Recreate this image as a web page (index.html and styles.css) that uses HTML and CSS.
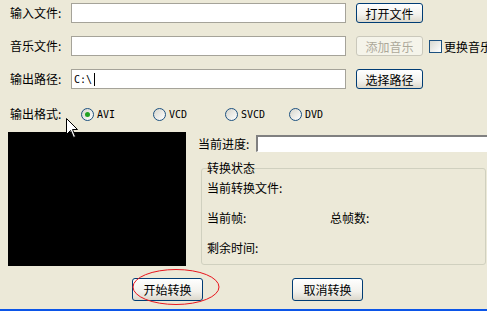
FILE: index.html
```html
<!DOCTYPE html>
<html lang="zh-CN">
<head>
    <meta charset="UTF-8">
    <title>视频转换</title>
    <link rel="stylesheet" href="styles.css">
</head>
<body>
    <div class="dialog">
        <div class="row">
            <label class="caption">输入文件:</label>
            <input type="text" class="field">
            <button class="btn">打开文件</button>
        </div>
        <div class="row">
            <label class="caption">音乐文件:</label>
            <input type="text" class="field">
            <button class="btn" disabled>添加音乐</button>
            <span class="check"></span>
            <span class="check-text">更换音乐</span>
        </div>
        <div class="row">
            <label class="caption">输出路径:</label>
            <div class="field path"><span class="mono">C:\</span><span class="caret"></span></div>
            <button class="btn">选择路径</button>
        </div>
        <div class="row radios">
            <label class="caption wide">输出格式:</label>
            <span class="opt"><span class="radio checked"></span><span class="mono">AVI</span></span>
            <span class="opt"><span class="radio"></span><span class="mono">VCD</span></span>
            <span class="opt last"><span class="radio"></span><span class="mono">SVCD</span></span>
            <span class="opt"><span class="radio"></span><span class="mono">DVD</span></span>
        </div>

        <div class="main">
            <div class="preview"></div>
            <div class="side">
                <div class="progress-row">
                    <span>当前进度:</span>
                    <div class="progress"></div>
                </div>
                <fieldset class="group">
                    <legend>转换状态</legend>
                    <div class="info">当前转换文件:</div>
                    <div class="info"><span class="half">当前帧:</span><span>总帧数:</span></div>
                    <div class="info">剩余时间:</div>
                </fieldset>
            </div>
        </div>

        <div class="actions">
            <button class="btn big">开始转换</button>
            <button class="btn big">取消转换</button>
        </div>
    </div>

    <svg class="cursor" width="13" height="21" viewBox="0 0 13 21">
        <path d="M0.5 0.5 L0.5 16.5 L4.5 12.5 L7.5 19.5 L9.5 18.5 L6.5 11.5 L11.5 11.5 Z" fill="#fff" stroke="#000" stroke-width="1"/>
    </svg>
    <svg class="mark" width="88" height="38" viewBox="0 0 88 38">
        <ellipse cx="44" cy="19" rx="43" ry="17.5" fill="none" stroke="#e8141c" stroke-width="1"/>
    </svg>
</body>
</html>
```

FILE: styles.css
```css
body {
    margin: 0;
    width: 487px;
    height: 311px;
    overflow: hidden;
    position: relative;
    box-sizing: border-box;
    background-color: #ece9d8;
    border-bottom: 2px solid #0b55e8;
    font-family: "Noto Sans CJK SC", sans-serif;
    font-size: 12px;
    color: #000;
}

.dialog {
    padding: 3px 0 0 8px;
}

.row {
    display: flex;
    align-items: center;
    height: 20px;
    margin-bottom: 13px;
    white-space: nowrap;
}

.caption {
    flex-shrink: 0;
    width: 63px;
    padding-left: 2px;
    box-sizing: border-box;
    line-height: 12px;
}

.caption.wide {
    width: 73px;
}

.field {
    flex-shrink: 0;
    width: 275px;
    height: 20px;
    margin: 0;
    padding: 0 2px;
    box-sizing: border-box;
    border: 1px solid #a5a399;
    background: #fff;
    font-size: 12px;
}

.path {
    display: flex;
    align-items: center;
}

.mono {
    font-family: "DejaVu Sans Mono", monospace;
    font-size: 10px;
}

.caret {
    width: 1px;
    height: 13px;
    margin-left: 2px;
    background: #000;
}

.btn {
    flex-shrink: 0;
    width: 67px;
    height: 20px;
    margin: 0 0 0 10px;
    padding: 0;
    border: 1px solid #003c74;
    border-radius: 3px;
    background: linear-gradient(#ffffff, #f2f1ec 60%, #dcd8cc);
    font-family: "Noto Sans CJK SC", sans-serif;
    font-size: 12px;
    color: #000;
}

.btn:disabled {
    border-color: #cac8bb;
    background: #f5f4ea;
    color: #aca899;
}

.check {
    flex-shrink: 0;
    width: 13px;
    height: 13px;
    margin-left: 6px;
    box-sizing: border-box;
    border: 1px solid #1c5180;
    background: linear-gradient(135deg, #d8d8d0, #ffffff);
}

.check-text {
    margin-left: 2px;
}

.radios {
    height: 14px;
    margin-top: 18px;
    margin-bottom: 11px;
}

.opt {
    flex-shrink: 0;
    display: flex;
    align-items: center;
    width: 72px;
}

.opt.last {
    width: 64px;
}

.radio {
    position: relative;
    width: 13px;
    height: 13px;
    margin-right: 3px;
    box-sizing: border-box;
    border: 1px solid #1c5180;
    border-radius: 50%;
    background: linear-gradient(135deg, #d6d5cc, #ffffff);
}

.radio.checked::after {
    content: "";
    position: absolute;
    left: 3px;
    top: 3px;
    width: 5px;
    height: 5px;
    border-radius: 50%;
    background: #21a121;
}

.main {
    display: flex;
}

.preview {
    flex-shrink: 0;
    width: 178px;
    height: 134px;
    background: #000;
}

.side {
    flex-shrink: 0;
    margin-left: 12px;
    padding-top: 3px;
}

.progress-row {
    display: flex;
    align-items: center;
    height: 17px;
    white-space: nowrap;
}

.progress-row span {
    width: 58px;
}

.progress {
    width: 240px;
    height: 17px;
    box-sizing: border-box;
    border-top: 2px solid #808080;
    border-left: 2px solid #808080;
    border-right: 1px solid #fff;
    border-bottom: 1px solid #fff;
    background: #fff;
}

.group {
    width: 285px;
    height: 103px;
    margin: 10px 0 0 3px;
    padding: 0 0 0 5px;
    box-sizing: border-box;
    border: 1px solid #d0d0bf;
    border-radius: 3px;
}

.group legend {
    padding: 0;
    line-height: 12px;
}

.info {
    line-height: 12px;
    margin-top: 8px;
    margin-bottom: 10px;
    white-space: nowrap;
}

.info + .info {
    margin-top: 18px;
    margin-bottom: 0;
}

.half {
    display: inline-block;
    width: 123px;
}

.actions {
    display: flex;
    gap: 18px;
    margin-top: 12px;
    padding-left: 124px;
}

.btn.big {
    width: 71px;
    height: 23px;
    margin: 0;
}

.actions .btn.big + .btn.big {
    margin-left: 71px;
}

.cursor {
    position: absolute;
    left: 66px;
    top: 118px;
}

.mark {
    position: absolute;
    left: 132px;
    top: 268px;
}
```
